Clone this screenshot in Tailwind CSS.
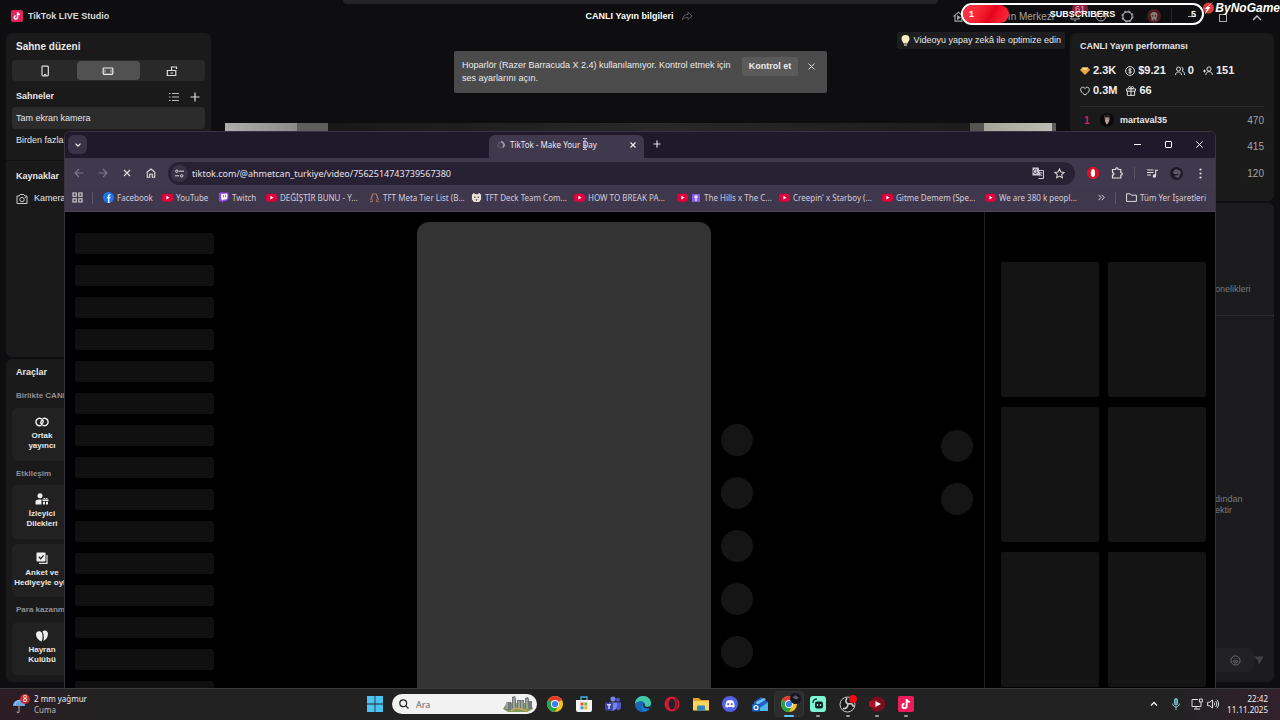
<!DOCTYPE html>
<html lang="tr">
<head>
<meta charset="utf-8">
<title>TikTok LIVE Studio</title>
<script src="https://cdn.jsdelivr.net/npm/@tailwindcss/browser@4"></script>
</head>
<body class="h-screen overflow-hidden flex flex-col bg-[#0e0e10] text-[#e6e6e6] font-['Liberation_Sans',Arial,sans-serif] text-[9px] leading-[13px]">
<svg class="hidden">
  <symbol id="yt" viewBox="0 0 12 12"><rect x="0" y="2" width="12" height="8.5" rx="2.2" fill="#e0003c"/><path d="M4.8 4.2v4l3.4-2z" fill="#fff"/></symbol>
  <symbol id="note" viewBox="0 0 16 16"><path d="M8.700 3v6.900a2.200 2.200 0 1 1-2.200-2.200M8.700 3c.2 1.700 1.400 2.800 3.200 2.900" fill="none" stroke="#fff" stroke-width="1.900"/></symbol>
  <symbol id="chrome" viewBox="0 0 16 16"><circle cx="8" cy="8" r="8" fill="#fbc116"/><path d="M8 8 1.100 4A8 8 0 0 1 14.900 4z" fill="#e33b2e"/><path d="M1.100 4A8 8 0 0 0 8 16l3.300-6.100L8 8z" fill="#2aa24c"/><circle cx="8" cy="8" r="4" fill="#fff"/><circle cx="8" cy="8" r="3.100" fill="#3b7ded"/></symbol>
</svg>

<main class="relative flex-1 min-h-0 overflow-hidden flex flex-col">
  <div class="absolute left-[343px] right-[342px] top-0 h-1 rounded-b bg-[#232324]"></div>

  <!-- Studio header -->
  <header class="h-8 shrink-0 grid grid-cols-[1fr_auto_1fr] items-center pl-[11px] pr-4">
    <div class="flex items-center gap-[5px] font-bold text-[#d8d8d8]">
      <svg class="size-3 rounded-xs bg-[#e0245a]"><use href="#note"/></svg>TikTok LIVE Studio
    </div>
    <div class="flex items-center gap-2 pl-1 font-bold text-white">CANLI Yayın bilgileri
      <button aria-label="Paylaş"><svg class="size-3" viewBox="0 0 12 12" fill="none" stroke="#5d5d5f"><path d="M7 2.200 11 6 7 9.600V7.400C4.500 7.300 2.500 8 1.500 9.600 1.700 6.500 3.500 4.600 7 4.400z"/></svg></button>
    </div>
    <div class="flex items-center justify-end text-[10px] text-[#a4a4a4]">
      <svg class="size-[11px]" viewBox="0 0 12 12" fill="none" stroke="currentColor" stroke-width="1.200"><path d="M.6 6 6 1.300 11.400 6M2.200 5v6h7.600V5"/><path d="M5 5.500v3.200l2.600-1.600z" fill="currentColor"/></svg>
      <span class="w-[105px] pr-[15px] text-right whitespace-nowrap">Yayın Merkezi</span>
      <svg class="size-3" viewBox="0 0 12 12" fill="none" stroke="currentColor"><path d="M1.500 9h9L9.300 7.500V5a3.300 3.300 0 0 0-6.600 0v2.500zM4.800 10.800h2.400"/></svg>
      <svg class="size-3 ml-[14px]" viewBox="0 0 12 12" fill="none" stroke="currentColor"><circle cx="6" cy="6" r="5"/><path d="M4.500 4.700c0-2 3-2 3 0C7.500 6 6 5.800 6 7.200M6 8.300v1"/></svg>
      <svg class="size-[13px] ml-[14px]" viewBox="0 0 14 14" fill="none" stroke="#bbb"><circle cx="7" cy="7" r="5" stroke-width="1.200"/><circle cx="7" cy="7" r="6" stroke-dasharray="2.500 2.210"/></svg>
      <svg class="size-[14px] ml-[13px]" viewBox="0 0 14 14"><circle cx="7" cy="7" r="7" fill="#4a1c20"/><path d="M3.500 6.500a3.500 3.500 0 0 1 7 0L9.500 9v2.500h-5V9z" fill="#8d7b75"/><path d="M4.800 6.300h1.500v1.300H4.800zM7.700 6.300h1.500v1.300H7.700zM6 10h.6v1.500H6zM7.400 10H8v1.500h-.6z" fill="#2b1719"/></svg>
      <span class="h-4 w-px ml-[10px] bg-[#29292b]"></span>
      <button class="ml-4 h-px w-[8px] bg-[#aaa]" aria-label="Küçült"></button>
      <button class="ml-[23px] mt-1 size-[8px] border border-[#aaa]" aria-label="Ekranı kapla"></button>
      <button class="ml-[23px] mt-1" aria-label="Kapat"><svg class="size-[14px]" viewBox="0 0 14 14" fill="none" stroke="#ccc" stroke-width="1.300"><path d="m3 9 4-4 4 4"/></svg></button>
    </div>
  </header>

  <div class="flex-1 min-h-0 flex px-[6px] pb-[6px] pt-px">
    <!-- Scenes, sources and tools -->
    <aside class="w-[205px] shrink-0 flex flex-col gap-[2px]">
      <section class="h-[324px] shrink-0 rounded-md bg-[#1a1a1b] px-[6px] pt-[7px] flex flex-col">
        <h2 class="px-1 text-[10px] font-bold">Sahne düzeni</h2>
        <div class="mt-[7px] h-[21px] shrink-0 rounded bg-[#29292a] grid grid-cols-3 p-px">
          <button class="flex items-center justify-center" aria-label="Dikey"><svg class="size-3" viewBox="0 0 12 12" fill="none" stroke="#ddd" stroke-width="1.200"><rect x="3" y="1.200" width="6.300" height="9.600" rx=".8"/><path d="M5 9.600h2.300"/></svg></button>
          <button class="flex items-center justify-center rounded bg-[#515151]" aria-label="Yatay"><svg class="size-3" viewBox="0 0 12 12" fill="none" stroke="#eee" stroke-width="1.200"><rect x="1.200" y="3" width="9.600" height="6.300" rx=".8"/><path d="M3 4.500v3.300M9 4.500v3.300" stroke="#aaa"/></svg></button>
          <button class="flex items-center justify-center" aria-label="Kilit"><svg class="size-3" viewBox="0 0 12 12" fill="none" stroke="#ddd" stroke-width="1.200"><path d="M1.300 5.500h8.500v5H1.300zM5.500 5.500V2h5v2M4.500 8h2.500"/></svg></button>
        </div>
        <div class="mt-[9px] px-1 flex items-center">
          <h2 class="font-bold flex-1">Sahneler</h2>
          <button class="mr-[11px]" aria-label="Liste"><svg class="size-[10px]" viewBox="0 0 10 10" stroke="#bbb"><path d="M0 1.500h1.500M3 1.500h7M0 5h1.500M3 5h7M0 8.500h1.500M3 8.500h7"/></svg></button>
          <button class="mr-px" aria-label="Sahne ekle"><svg class="size-[10px]" viewBox="0 0 10 10" stroke="#ddd" stroke-width="1.200"><path d="M5 .5v9M.5 5h9"/></svg></button>
        </div>
        <button class="mt-1 h-[22px] shrink-0 rounded bg-[#2c2c2d] px-1 text-left">Tam ekran kamera</button>
        <button class="h-[22px] shrink-0 px-1 text-left">Birden fazla kamera</button>
        <hr class="mt-[9px] -mx-[6px] border-[#111]">
        <h2 class="mt-[9px] px-1 font-bold">Kaynaklar</h2>
        <div class="mt-[9px] px-1 flex items-center gap-[6px]">
          <svg class="size-3" viewBox="0 0 12 12" fill="none" stroke="#ccc"><path d="M1 3h2.200l1-1.500h3.600l1 1.500H11v7.500H1z"/><circle cx="6" cy="6.600" r="2.200"/><path d="M8.800 4.500h1"/></svg>Kamera
        </div>
      </section>
      <section class="flex-1 min-h-0 rounded-md bg-[#1a1a1b] px-[6px] pt-[7px] flex flex-col">
        <h2 class="px-1 font-bold">Araçlar</h2>
        <h3 class="mt-[10px] px-1 text-[8px] font-bold text-[#8f8f90]">Birlikte CANLI</h3>
        <button class="mt-[6px] h-[53px] w-[60px] rounded-md bg-[#212122] flex flex-col items-center pt-2 text-[8px] leading-[10px] font-bold">
          <svg class="w-[14px] h-3 mb-[3px]" viewBox="0 0 14 12" fill="none" stroke="#eee" stroke-width="1.400"><path d="M6.300 9.300A3.700 3.700 0 1 1 8 4.500C8.500 6 8 7 7 7.800M7.700 2.700A3.700 3.700 0 1 1 6 7.500C5.500 6 6 5 7 4.200"/></svg>Ortak<br>yayıncı</button>
        <h3 class="mt-[6px] px-1 text-[8px] font-bold text-[#8f8f90]">Etkileşim</h3>
        <button class="mt-[5px] h-[54px] w-[60px] rounded-md bg-[#212122] flex flex-col items-center pt-2 text-[8px] leading-[10px] font-bold">
          <svg class="w-[14px] h-3 mb-1" viewBox="0 0 14 12" fill="#eee"><circle cx="5" cy="2.800" r="2.500"/><path d="M.5 11.500V8.600C.5 6.800 2 6.400 6.500 6.400v5.100zM7.500 6.500h6V8h-6zM8 8.800h2v2.700H8zM11 8.800h2v2.700h-2zM8.500 5h1.800v1H8.500zM11 5h1.500v1H11z"/></svg>İzleyici<br>Dilekleri</button>
        <button class="mt-[5px] h-[53px] w-[60px] rounded-md bg-[#212122] flex flex-col items-center pt-2 text-[8px] leading-[10px] font-bold whitespace-nowrap">
          <svg class="w-[14px] h-3 mb-1" viewBox="0 0 14 12"><rect x="1.500" y=".5" width="9" height="9" rx="1" fill="#eee"/><path d="M12 3v8.300H4" fill="none" stroke="#ddd" stroke-width="1.200"/><path d="m3.800 4.800 1.800 2 3-3.500" fill="none" stroke="#222" stroke-width="1.300"/></svg>Anket ve<br>Hediyeyle oyla</button>
        <h3 class="mt-[6px] px-1 text-[8px] font-bold text-[#8f8f90]">Para kazanma</h3>
        <button class="mt-[6px] h-[53px] w-[60px] rounded-md bg-[#212122] flex flex-col items-center pt-2 text-[8px] leading-[10px] font-bold">
          <svg class="w-[14px] h-3 mb-[3px]" viewBox="0 0 14 12" fill="#eee"><path d="M6.500 11.500C3 10 1 7.500 1 4.300 1 .5 5.500.2 7 3c.8 2.500.8 6-.5 8.500z"/><path d="M8.300 11C9.200 8 9 4.500 7.500 1.500 10-.5 13 1 13 4c0 3-2 5.800-4.700 7z"/></svg>Hayran<br>Kulübü</button>
      </section>
    </aside>

    <!-- Preview -->
    <section class="flex-1 min-w-0 pl-[14px] pr-[5px] flex flex-col">
      <button class="self-end -mt-px h-[17px] px-1 rounded-xs bg-[#1d1d1f] flex items-center gap-1 whitespace-nowrap">
        <svg class="w-[9px] h-[11px]" viewBox="0 0 9 11"><path d="M4.500 0A4 4 0 0 0 .5 4c0 2 1.500 2.800 2 4.500h4C7 6.800 8.500 6 8.500 4a4 4 0 0 0-4-4z" fill="#f6ecc0"/><path d="M3 9h3v2H3z" fill="#9c968a"/></svg>Videoyu yapay zekâ ile optimize edin</button>
      <div class="mt-[74px] mr-[9px] h-3 flex">
        <div class="w-[72px] bg-linear-to-r from-[#adadab] to-[#8b8b89]"></div>
        <div class="w-[31px] bg-[#5e5e5c]"></div>
        <div class="flex-1 bg-linear-to-r from-[#181818] via-[#282828] to-[#1c1c1c]"></div>
        <div class="w-[14px] bg-[#55554f]"></div>
        <div class="w-[68px] bg-linear-to-r from-[#a5a69a] to-[#bcbcb2]"></div>
        <div class="w-1 bg-[#5c5c5a]"></div>
      </div>
    </section>

    <!-- Performance and chat -->
    <aside class="w-[204px] shrink-0 flex flex-col gap-[2px]">
      <section class="h-[168px] shrink-0 rounded-md bg-[#1a1a1b] px-[10px] pt-[7px]">
        <h2 class="font-bold">CANLI Yayın performansı</h2>
        <div class="mt-[11px] flex gap-[9px] text-[11px] font-bold text-[#f0f0f0]">
          <span class="flex items-center gap-[3px]"><svg class="size-[10px]" viewBox="0 0 10 10"><path d="M2 1.500h6L10 4 5 9 0 4z" fill="#eea63f"/><path d="M2 1.500h6L6.500 4h-3z" fill="#ffd98d"/></svg>2.3K</span>
          <span class="flex items-center gap-[3px]"><svg class="size-[10px]" viewBox="0 0 10 10" fill="none" stroke="#ddd"><circle cx="5" cy="5" r="4.400"/><path d="M6.500 3.500c-.7-.8-2.900-.6-2.900.4C3.600 5.300 6.500 4.700 6.500 6c0 1.200-2.300 1.200-3 .3M5 2v6"/></svg>$9.21</span>
          <span class="flex items-center gap-[3px]"><svg class="size-[10px]" viewBox="0 0 10 10" fill="none" stroke="#ddd"><circle cx="3.500" cy="3" r="2"/><path d="M.5 9c0-4 6-4 6 0M6.500 1.200a2 2 0 0 1 .5 3.700C9 5.500 9.500 7 9.500 9"/></svg>0</span>
          <span class="flex items-center gap-[3px]"><svg class="size-[10px]" viewBox="0 0 10 10" fill="none" stroke="#ddd"><circle cx="6" cy="3" r="2.100"/><path d="M2.800 9c0-4.500 6.500-4.500 6.500 0M0 5h3M1.500 3.500v3"/></svg>151</span>
        </div>
        <div class="mt-[7px] flex gap-[9px] text-[11px] font-bold text-[#f0f0f0]">
          <span class="flex items-center gap-[3px]"><svg class="size-[10px]" viewBox="0 0 10 10" fill="none" stroke="#ddd"><path d="M5 9C2 7 .6 5.300.6 3.500.6 1 3.800.4 5 2.500 6.200.4 9.400 1 9.400 3.500 9.400 5.300 8 7 5 9z"/></svg>0.3M</span>
          <span class="flex items-center gap-[3px]"><svg class="size-[10px]" viewBox="0 0 10 10" fill="none" stroke="#ddd"><path d="M.6 2.800h8.800v2.400H.6zM1.400 5.200v4.200h7.200V5.200M5 2.800v6.600M5 2.800C2 2.500 2 .5 3.500.5S5 2.800 5 2.800 5 .5 6.500.5 8 2.500 5 2.800"/></svg>66</span>
        </div>
        <hr class="mt-[9px] border-[#2c2c2d]">
        <div class="mt-[6px] h-[14px] flex items-center">
          <span class="w-5 pl-1 text-[10px] font-bold text-[#d3244f]">1</span>
          <svg class="size-[14px] mr-[6px]" viewBox="0 0 14 14"><circle cx="7" cy="7" r="7" fill="#08080a"/><path d="M4.500 3h4.600l.4 4L8 10.500l-1.500 1L5 8z" fill="#b7a49a"/><path d="M4 2.500 9.500 2l.5 3-2-1-3.500.5zM5 6h1.200M7.500 6h1.200" fill="#181416" stroke="#443835" stroke-width=".6"/></svg>
          <span class="flex-1 font-bold">martaval35</span><span class="text-[10px] text-[#a3a3a3]">470</span>
        </div>
        <div class="mt-[13px] h-[13px] text-right text-[10px] text-[#a3a3a3]">415</div>
        <div class="mt-[14px] h-[13px] text-right text-[10px] text-[#a3a3a3]">120</div>
      </section>
      <section class="flex-1 min-h-0 rounded-md bg-[#1b1b1d] leading-[11px] text-[#79797b] flex flex-col">
        <p class="mt-[81px] pl-[145px]">onelikleri</p>
        <hr class="mt-[20px] border-[#2d2d2f]">
        <div class="mt-[178px] pl-[145px]"><p>dından</p><p>ektir</p></div>
        <div class="mt-auto mb-[10px] mr-[10px] flex items-center justify-end">
          <button class="h-6 w-10 pl-4 rounded bg-[#212123]" aria-label="Emoji"><svg class="size-[11px]" viewBox="0 0 12 12" fill="none" stroke="#737375"><circle cx="6" cy="6" r="5"/><path d="M3.500 6.500h5c-.3 3-4.700 3-5 0zM4 4h.8M7.200 4H8"/></svg></button>
          <button class="-ml-px" aria-label="Gönder"><svg class="size-[11px]" viewBox="0 0 11 11"><path d="M.5 1.500h10L6 10 5 5.500z" fill="#414143"/></svg></button>
        </div>
      </section>
    </aside>
  </div>

  <!-- Speaker notice -->
  <div class="absolute left-[454px] top-[51px] w-[373px] rounded-xs bg-[#4b4b4b] pl-2 pr-3 pt-[6px] pb-[8px] flex items-start text-[#ececec]">
    <p class="w-[280px] pt-[2px]">Hoparlör (Razer Barracuda X 2.4) kullanılamıyor. Kontrol etmek için ses ayarlarını açın.</p>
    <button class="h-[19px] w-[56px] shrink-0 rounded-xs bg-[#5a5a5a] font-bold">Kontrol et</button>
    <button class="ml-auto mt-[6px]" aria-label="Kapat"><svg class="size-[7px]" viewBox="0 0 7 7" stroke="#ddd"><path d="m.5.5 6 6M6.500.5l-6 6"/></svg></button>
  </div>

  <!-- Subscriber goal -->
  <span class="absolute right-[192px] top-[3px] h-3 px-[3px] rounded-full bg-[#d32357]/60 text-[9px] leading-3 text-[#f5a9bf]">61</span>
  <div class="absolute right-[76px] top-[3px] w-[243px] h-[22px] rounded-full border-2 border-white overflow-hidden text-white font-bold">
    <div class="h-full w-[46px] rounded-r-full bg-linear-120 from-[#ff3040] from-20% via-[#e8001c] via-60% to-[#ff2c3c]"></div>
    <div class="absolute inset-0 flex items-center justify-between px-[6px]"><span>1</span><span>SUBSCRIBERS</span><span>5</span></div>
  </div>
  <div class="absolute right-0 top-0 flex items-center text-[12px] leading-4 italic font-bold text-white">
    <svg class="w-3 h-[14px]" viewBox="0 0 12 14"><circle cx="5.500" cy="7" r="5.500" fill="#dd3b36"/><path d="M11 0 5 6h2.500L1.500 14l2.500-6H1.500z" fill="#fff"/></svg>ByNoGame</div>

  <!-- Browser window -->
  <section class="absolute inset-x-16 top-[131px] bottom-0 rounded-t-md overflow-hidden border-x border-t border-[#393342] bg-black flex flex-col font-['Noto_Sans','Open_Sans',sans-serif] text-[#ddd8e4]">
    <div class="h-[26px] shrink-0 bg-[#1f192c] flex items-start pl-[3px] pr-3">
      <button class="mt-[3px] size-[19px] rounded-md bg-[#3a3347] flex items-center justify-center" aria-label="Sekme ara"><svg class="size-2" viewBox="0 0 8 8" fill="none" stroke="#eee" stroke-width="1.200"><path d="m1.500 2.700 2.500 2.500 2.500-2.500"/></svg></button>
      <div class="ml-[402px] mt-[3px] h-[23px] w-[155px] rounded-t-md bg-[#40384d] flex items-center pl-2 pr-2 pb-1 text-[8px] text-[#efeaf4]">
        <svg class="size-2 mr-[5px]" viewBox="0 0 8 8" fill="none"><circle cx="3.500" cy="4" r="2.600" stroke="#6b6378"/><path d="M4 .6a3.400 3.400 0 0 1 2 6" stroke="#ddd"/></svg>
        <span class="flex-1 whitespace-nowrap">TikTok - Make Your Day</span>
        <button aria-label="Sekmeyi kapat"><svg class="size-[6px]" viewBox="0 0 6 6" stroke="#eee" stroke-width="1.100"><path d="m.5.5 5 5M5.500.5l-5 5"/></svg></button>
      </div>
      <button class="ml-[9px] mt-[8px]" aria-label="Yeni sekme"><svg class="size-2" viewBox="0 0 8 8" stroke="#ddd" stroke-width="1.200"><path d="M4 .5v7M.5 4h7"/></svg></button>
      <div class="flex-1"></div>
      <button class="mt-3 w-[7px] h-px bg-white" aria-label="Simge durumuna küçült"></button>
      <button class="ml-6 mt-[9px] size-[7px] rounded-[1px] border border-white" aria-label="Ekranı kapla"></button>
      <button class="ml-6 mt-[9px]" aria-label="Pencereyi kapat"><svg class="size-[7px]" viewBox="0 0 7 7" stroke="#fff"><path d="m.3.3 6.400 6.400M6.700.3.3 6.700"/></svg></button>
    </div>
    <div class="h-[30px] shrink-0 bg-[#40384d] flex items-center pl-[9px] pr-[13px]">
      <button aria-label="Geri"><svg class="size-[10px]" viewBox="0 0 10 10" fill="none" stroke="#7f778b" stroke-width="1.100"><path d="M9.500 5H1M5 1 1 5l4 4"/></svg></button>
      <button class="ml-[14px]" aria-label="İleri"><svg class="size-[10px]" viewBox="0 0 10 10" fill="none" stroke="#7f778b" stroke-width="1.100"><path d="M.5 5H9M5 1l4 4-4 4"/></svg></button>
      <button class="ml-[15px]" aria-label="Durdur"><svg class="size-2" viewBox="0 0 8 8" stroke="#ddd" stroke-width="1.200"><path d="m1 1 6 6M7 1 1 7"/></svg></button>
      <button class="ml-[15px]" aria-label="Ana sayfa"><svg class="size-[10px]" viewBox="0 0 10 10" fill="none" stroke="#ddd" stroke-width="1.100"><path d="M1.300 4 5 1l3.700 3v5.300H6.300v-3H3.700v3H1.300z"/></svg></button>
      <div class="ml-3 h-[23px] flex-1 rounded-full bg-[#282133] flex items-center pl-[3px] pr-[10px]">
        <button class="size-[17px] rounded-full bg-[#3a3347] flex items-center justify-center" aria-label="Site bilgileri"><svg class="size-[9px]" viewBox="0 0 9 9" fill="none" stroke="#ddd"><circle cx="1.800" cy="2.200" r="1.200"/><path d="M4 2.200h5M0 6.800h4"/><circle cx="6.700" cy="6.800" r="1.200"/></svg></button>
        <input class="ml-1 flex-1 min-w-0 bg-transparent outline-none text-[9px] text-[#e6e0ec]" aria-label="Adres" value="tiktok.com/@ahmetcan_turkiye/video/7562514743739567380">
        <button aria-label="Çevir"><svg class="size-3" viewBox="0 0 12 12"><path d="M.5.5h6l2 8h-8z" fill="#cfc9d6"/><path d="M5.500 3.500h6v8h-5" fill="none" stroke="#cfc9d6"/><path d="M5 3.200A2 2 0 1 0 5.300 5H4" fill="none" stroke="#3a3347" stroke-width=".9"/><path d="M7.700 5.700h3M9.200 5v.7C9 7.500 8.500 8.500 7.500 9.200M8.300 7l2 2.200" fill="none" stroke="#cfc9d6" stroke-width=".7"/></svg></button>
        <button class="ml-[10px]" aria-label="Yer işareti ekle"><svg class="size-[11px]" viewBox="0 0 12 12" fill="none" stroke="#ddd" stroke-width="1.100"><path d="m6 1 1.500 3.300 3.500.4-2.600 2.400.7 3.600L6 8.900l-3.100 1.800.7-3.600L1 4.700l3.500-.4z"/></svg></button>
      </div>
      <svg class="size-3 ml-3" viewBox="0 0 12 12"><path d="M3.500 0h5L12 3.500v5L8.500 12h-5L0 8.500v-5z" fill="#d3122a"/><path d="M3.800 5.500 4.500 3l.8-.8.8-.5.7.6.9.7L8 6.500c.2 2-.8 3.500-2 3.500S3.500 8.500 3.800 5.500z" fill="#fff"/></svg>
      <button class="ml-3" aria-label="Uzantılar"><svg class="size-3" viewBox="0 0 12 12" fill="none" stroke="#ddd" stroke-width="1.200"><path d="M1.500 2.500h3C4.500.3 7.200.3 7.200 2.500h2.600v3c2 0 2 2.600 0 2.600V11H1.500V8.200c1.800 0 1.800-2.600 0-2.600z"/></svg></button>
      <span class="ml-[11px] mr-3 h-3 w-px bg-[#5c5369]"></span>
      <button aria-label="Medya"><svg class="size-[11px]" viewBox="0 0 11 11" fill="none" stroke="#ddd" stroke-width="1.100"><path d="M0 2h6.500M0 4.500h6.500M0 7h4M8.600 8V2.200H11"/><circle cx="7.400" cy="8" r="1.200" fill="#ddd"/></svg></button>
      <button class="ml-3" aria-label="Profil"><svg class="size-[13px]" viewBox="0 0 13 13"><circle cx="6.500" cy="6.500" r="6.500" fill="#1c1a25"/><path d="M3 4.500 6 2l4 1.500 1 3-2 1-3-2-2 2zM4 9l3-1 3 1.500-2 1.500z" fill="#5a5666"/><path d="M5 6.500h2M8 8h2" stroke="#a19cae" stroke-width=".7"/></svg></button>
      <button class="ml-4" aria-label="Menü"><svg class="w-[3px] h-[11px]" viewBox="0 0 3 11" fill="#ddd"><circle cx="1.500" cy="1.500" r="1.100"/><circle cx="1.500" cy="5.500" r="1.100"/><circle cx="1.500" cy="9.500" r="1.100"/></svg></button>
    </div>
    <nav class="h-6 shrink-0 pb-1 bg-[#3f374b] border-b border-[#4a4455] flex items-center pl-[7px] pr-[9px] text-[8px] whitespace-nowrap text-[#d3cddb]">
      <button aria-label="Uygulamalar"><svg class="size-[11px]" viewBox="0 0 11 11" fill="none" stroke="#ddd" stroke-width="1.100"><path d="M1 1h3.200v3.200H1zM6.800 1H10v3.200H6.800zM1 6.800h3.200V10H1zM6.800 6.800H10V10H6.800z"/></svg></button>
      <span class="ml-[9px] mr-[10px] h-3 w-px bg-[#5c5369]"></span>
      <a href="#" class="w-[59px] flex items-center gap-[3px]"><svg class="size-[11px]" viewBox="0 0 12 12"><circle cx="6" cy="6" r="6" fill="#1877f2"/><path d="M8.200 3.200c-1.700-.3-2 .3-2 1.500V12M4.300 6.200H8" fill="none" stroke="#fff" stroke-width="1.500"/></svg>Facebook</a>
      <a href="#" class="w-[56px] flex items-center gap-[3px]"><svg class="size-[11px]"><use href="#yt"/></svg>YouTube</a>
      <a href="#" class="w-12 flex items-center gap-[3px]"><svg class="size-[11px]" viewBox="0 0 12 12"><path d="M1.500.5h10v7L8.500 10H6.300L4 12v-2H1V2.500z" fill="#8d46f0"/><path d="M3.500 1.800h6.700V7L8.500 8.300H6L4.800 9.500V8.300H3.500z" fill="#fff"/><path d="M6 3.500v2.300M8.200 3.500v2.300" stroke="#8d46f0"/></svg>Twitch</a>
      <a href="#" class="w-[103px] flex items-center gap-[3px]"><svg class="size-[11px]"><use href="#yt"/></svg>DEĞİŞTİR BUNU - Y...</a>
      <a href="#" class="w-[102px] flex items-center gap-[3px]"><svg class="size-[11px]" viewBox="0 0 12 12" fill="none" stroke="#a97a6c"><path d="M1 10.500h3L3.500 8 2.800 7 4 2h4l1.200 5-.7 1-.5 2.500h3M4 2 1.500 9M8 2l2.500 7"/></svg>TFT Meta Tier List (B...</a>
      <a href="#" class="w-[103px] flex items-center gap-[3px]"><svg class="size-[11px]" viewBox="0 0 12 12"><path d="M1 3 3 1l2 1.500h2L9 1l2 2v8H1z" fill="#e9e2da"/><path d="M3.500 5h1.200v1.500H3.500zM7.300 5h1.200v1.500H7.300zM1 8l2 3H1zM11 8l-2 3h2zM5 8h2l-1 2z" fill="#40343a"/></svg>TFT Deck Team Com...</a>
      <a href="#" class="w-[103px] flex items-center gap-[3px]"><svg class="size-[11px]"><use href="#yt"/></svg>HOW TO BREAK PA...</a>
      <a href="#" class="w-[102px] flex items-center gap-[3px]"><svg class="size-[11px]"><use href="#yt"/></svg><svg class="ml-px mr-px size-2" viewBox="0 0 8 8"><rect width="8" height="8" rx="1" fill="#8a5cf0"/><path d="M4 1v6M2 3h4" stroke="#fff" stroke-width="1.200"/></svg>The Hills x The C...</a>
      <a href="#" class="w-[103px] flex items-center gap-[3px]"><svg class="size-[11px]"><use href="#yt"/></svg>Creepin' x Starboy (...</a>
      <a href="#" class="w-[103px] flex items-center gap-[3px]"><svg class="size-[11px]"><use href="#yt"/></svg>Gitme Demem (Spe...</a>
      <a href="#" class="w-[103px] flex items-center gap-[3px]"><svg class="size-[11px]"><use href="#yt"/></svg>We are 380 k peopl...</a>
      <div class="flex-1"></div>
      <button aria-label="Diğer yer işaretleri"><svg class="size-[7px]" viewBox="0 0 7 7" fill="none" stroke="#ddd"><path d="m.5.8 2.500 2.700L.5 6.200M3.700.8l2.500 2.700-2.500 2.700"/></svg></button>
      <span class="mx-[10px] h-3 w-px bg-[#5c5369]"></span>
      <a href="#" class="flex items-center gap-[3px]"><svg class="size-[11px]" viewBox="0 0 11 11" fill="none" stroke="#ddd"><path d="M.6 1.800h3.600l1.200 1.400h5v6.200H.6z"/></svg>Tüm Yer İşaretleri</a>
    </nav>

    <!-- Loading page -->
    <div class="flex-1 min-h-0 flex items-stretch overflow-hidden">
      <div class="w-[149px] shrink-0 pl-[10px] pt-[21px] flex flex-col gap-[11px] *:h-[21px] *:shrink-0 *:rounded-xs *:bg-[#101010]">
        <div></div><div></div><div></div><div></div><div></div><div></div><div></div><div></div><div></div><div></div><div></div><div></div><div></div><div></div><div></div>
      </div>
      <div class="flex-1 flex pl-[203px] pr-[11px]">
        <div class="mt-[10px] w-[294px] rounded-t-xl bg-[#333]"></div>
        <div class="ml-[10px] pt-[212px] flex flex-col gap-[21px] *:size-8 *:shrink-0 *:rounded-full *:bg-[#151515]">
          <div></div><div></div><div></div><div></div><div></div>
        </div>
        <div class="ml-auto pt-[218px] flex flex-col gap-[21px] *:size-8 *:shrink-0 *:rounded-full *:bg-[#151515]">
          <div></div><div></div>
        </div>
      </div>
      <div class="w-[231px] shrink-0 border-l border-[#1e1e1e] pl-4 pr-[9px] pt-[50px] grid grid-cols-2 auto-rows-[135px] gap-x-[9px] gap-y-[10px] *:rounded-xs *:bg-[#141414]">
        <div></div><div></div><div></div><div></div><div></div><div></div>
      </div>
    </div>
  </section>
  <svg class="absolute left-[582px] top-[138px] w-[6px] h-3" viewBox="0 0 6 12" fill="none" stroke="#c9c4d0"><path d="M1 .5h1.500l.5.500.5-.5H5M3 1v10M1 11.500h1.500l.5-.5.5.500H5M1.500 7.500h3"/></svg>
</main>

<!-- Taskbar -->
<footer class="h-8 shrink-0 border-t border-[#3a3a3b] bg-[linear-gradient(90deg,#2d1d24,#222223_8%,#222223_92%,#33212b)] grid grid-cols-[1fr_auto_1fr] items-center font-['Noto_Sans','Open_Sans',sans-serif] text-[8px] leading-[11px] text-[#eee]">
  <div class="flex items-center gap-1 pl-[12px] pb-[2px]">
    <svg class="w-[18px] h-5" viewBox="0 0 18 20"><path d="M1 12c0-8 12-8 12 0z" fill="#6aa5e6"/><path d="M3 11c1-4 4-5 6-5" stroke="#b5d5f7" fill="none"/><path d="M7 11v6.500c0 1.500-2 1.500-2 0" fill="none" stroke="#999" stroke-width="1.200"/><circle cx="13" cy="5" r="5" fill="#c42b38"/><text x="13" y="8" text-anchor="middle" font-size="8" fill="#fff">8</text></svg>
    <p>2 mm yağmur<br><span class="text-[#bbb]">Cuma</span></p>
  </div>
  <div class="flex items-center pl-2 pb-px">
    <button aria-label="Başlat"><svg class="size-4" viewBox="0 0 16 16"><path d="M0 0h7.600v7.600H0zM8.400 0H16v7.600H8.400zM0 8.400h7.600V16H0zM8.400 8.400H16V16H8.400z" fill="#4cc2f1"/></svg></button>
    <label class="ml-[9px] h-5 w-[145px] rounded-full bg-[#f2f2f2] flex items-center pl-[7px] pr-1">
      <svg class="size-[10px] shrink-0" viewBox="0 0 10 10" fill="none" stroke="#222" stroke-width="1.200"><circle cx="4.200" cy="4.200" r="3.400"/><path d="m6.800 6.800 2.700 2.700"/></svg>
      <input class="ml-[7px] flex-1 min-w-0 outline-none text-[9px] placeholder:text-[#666]" placeholder="Ara" aria-label="Ara">
      <svg class="w-[30px] h-4" viewBox="0 0 30 16"><path d="M0 13 3 8l4-2 3 1h12l6 1 2 5-6 3H5z" fill="#7f9a58"/><path d="M3 6h5v8H3zM9 1l3-1 1 3v11H9zM14 4h7v10h-7zM22 2l3-1 1 2v10h-4zM26 5h3v8h-3z" fill="#747a7b"/><path d="M4 6v7M11 2v11M16 5v8M19 5v8M24 3v10" stroke="#c0c8c7"/><path d="M8 15c2-3 7-3 10-2s5 1 6 2" stroke="#c9ac55" stroke-width="1.500" fill="none"/></svg>
    </label>
    <div class="ml-[3px] w-[381px] grid grid-cols-13 *:relative *:h-[26px] *:flex *:items-center *:justify-center">
      <button aria-label="Chrome"><svg class="size-4"><use href="#chrome"/></svg></button>
      <button aria-label="Microsoft Store"><svg class="size-4" viewBox="0 0 16 16"><path d="M5 4V1h6v3" fill="none" stroke="#3cb3e8" stroke-width="1.300"/><path d="M0 4h16v10q0 2-2 2H2q-2 0-2-2z" fill="#f3f3f3"/><path d="M4.500 6.500h3v3h-3z" fill="#e4502d"/><path d="M8.300 6.500h3v3h-3z" fill="#7db52f"/><path d="M4.500 10.300h3v3h-3z" fill="#2c9fe0"/><path d="M8.300 10.300h3v3h-3z" fill="#f2b51d"/></svg></button>
      <button aria-label="Teams"><svg class="size-4" viewBox="0 0 16 16"><circle cx="8" cy="3" r="2.600" fill="#7b83eb"/><circle cx="13" cy="3.800" r="2" fill="#5059c9"/><path d="M10 6.500h6V11a3 3 0 0 1-4 3z" fill="#5059c9"/><path d="M4 6.500h8V11a4.500 4.500 0 0 1-8 2z" fill="#7b83eb"/><rect y="6.500" width="8" height="8" rx="1" fill="#3c45a9"/><path d="M2 8.700h4M4 8.700V13" stroke="#fff" stroke-width="1.100"/></svg></button>
      <button aria-label="Edge"><svg class="size-4" viewBox="0 0 16 16"><circle cx="8" cy="8" r="8" fill="#1478cf"/><path d="M0 8C0 3 4 0 8 0c5 0 8 3.500 8 7 0 2.500-2 4-4.500 4C9 11 9 9.500 10 8.500 10 5 4 3.500 0 8z" fill="#42c8a4"/><path d="M0 8c3-4 8-3.500 10 0-5-1-5 6 0 7.800C4 17 0 12.500 0 8z" fill="#1b65b4"/><path d="M9.500 8c-2 2 .5 4.500 5.500 3.300" stroke="#222" stroke-width="1.500" fill="none"/></svg></button>
      <button aria-label="Opera"><svg class="size-4" viewBox="0 0 16 16"><circle cx="8" cy="8" r="7.500" fill="#d81b33"/><ellipse cx="8" cy="8" rx="3.400" ry="5.500" fill="#242324"/><path d="M11 2c3 3 3 9 0 12" stroke="#9b1124" stroke-width="2" fill="none"/></svg></button>
      <button aria-label="Dosya Gezgini"><svg class="size-4" viewBox="0 0 16 16"><path d="M0 2h6l2 2h8v10H0z" fill="#e0a22a"/><path d="M0 5h16v9.500H0z" fill="#fbd45c"/><path d="M4 10.500q0-1 1-1h6q1 0 1 1v4H4z" fill="#2b83c8"/></svg></button>
      <button aria-label="Discord"><svg class="size-4" viewBox="0 0 16 16"><circle cx="8" cy="8" r="8" fill="#5661e8"/><path d="M5 4.700c2-.6 4-.6 6 0 1.300 2 1.800 4 1.600 6l-2 1-.7-1c-1.300.3-2.500.3-3.800 0l-.7 1-2-1c-.2-2 .3-4 1.600-6z" fill="#fff"/><circle cx="6.200" cy="8.200" r="1.100" fill="#5661e8"/><circle cx="9.800" cy="8.200" r="1.100" fill="#5661e8"/></svg></button>
      <button aria-label="Outlook"><svg class="size-4" viewBox="0 0 16 16"><path d="M2 6 9 1l7 5v9H2z" fill="#1e65c5"/><path d="m4 6 8-4 2 1.300L5 9z" fill="#74c5f5"/><path d="M3 15 16 6.500V15z" fill="#51b6ef"/><rect y="8" width="8" height="7.500" rx="1" fill="#145cb8"/><circle cx="4" cy="11.700" r="2" fill="none" stroke="#fff" stroke-width="1.200"/></svg></button>
      <button class="rounded bg-[#2c2c2d] border border-[#343435]" aria-label="Chrome, açık"><svg class="size-4"><use href="#chrome"/></svg><svg class="absolute right-[2px] top-px size-[11px]" viewBox="0 0 10 10"><circle cx="5" cy="5" r="5" fill="#18151f"/><path d="m2 4 3-2 3 2-2 2-2-1zM4 8l3-1" fill="#5e586c"/></svg><span class="absolute -bottom-px h-[2px] w-[10px] rounded bg-[#5cc5f3]"></span></button>
      <button aria-label="Streamlabs"><svg class="size-4" viewBox="0 0 16 16"><rect width="16" height="16" rx="3" fill="#80f5d2"/><path d="M3 7c0-2.500 1.500-4 4-4" stroke="#10382f" stroke-width="1.300" fill="none"/><rect x="5" y="5.500" width="8" height="7" rx="2" fill="#10221f"/><path d="M7.500 8v2M10.500 8v2" stroke="#80f5d2" stroke-width="1.200"/></svg><span class="absolute bottom-0 h-[2px] w-1 rounded bg-[#9a9a9a]"></span></button>
      <button aria-label="OBS Studio"><svg class="size-[18px]" viewBox="0 0 18 18"><circle cx="8.500" cy="9.500" r="7.500" fill="#1b1b1c" stroke="#ccc"/><path d="M8 3c-2 3-1 5 1 6M9 9c3-1 5 0 5.500 3M9 9c0 3-2 5-5 4.500" stroke="#ccc" stroke-width="1.600" fill="none"/><circle cx="14" cy="4" r="4" fill="#f00b12"/></svg><span class="absolute bottom-0 h-[2px] w-1 rounded bg-[#9a9a9a]"></span></button>
      <button aria-label="YouTube"><svg class="size-4" viewBox="0 0 16 16"><circle cx="8.500" cy="8" r="7.500" fill="#7c0d1d"/><path d="M0 5.500 8 4v8l-8-1.500z" fill="#b10e28"/><path d="M6.500 5v6L12 8z" fill="#fff"/></svg><span class="absolute bottom-0 h-[2px] w-1 rounded bg-[#9a9a9a]"></span></button>
      <button aria-label="TikTok LIVE Studio"><svg class="size-4 rounded-xs bg-[#ec1c5a]"><use href="#note"/></svg><span class="absolute bottom-0 h-[2px] w-1 rounded bg-[#9a9a9a]"></span></button>
    </div>
  </div>
  <div class="flex items-center justify-end pr-3 pb-px">
    <button aria-label="Gizli simgeler"><svg class="size-2" viewBox="0 0 8 8" fill="none" stroke="#eee" stroke-width="1.300"><path d="m1 5.500 3-3 3 3"/></svg></button>
    <svg class="ml-[14px] w-2 h-3" viewBox="0 0 8 12" fill="none" stroke="#7cc7cf"><rect x="2.500" y=".5" width="3" height="6.500" rx="1.500" fill="#4f949c"/><path d="M.6 5.500c0 4.500 6.800 4.500 6.800 0M4 9v3"/></svg>
    <svg class="ml-[11px] size-3" viewBox="0 0 12 12" fill="none" stroke="#ddd"><path d="M7 1.500H1v7h9V6M5 8.500v2M3 11h6M8.500 1h2.800v3H8.500zM10 4v2"/></svg>
    <svg class="ml-1 size-3" viewBox="0 0 12 12" fill="none" stroke="#ddd"><path d="M.6 4.300h2L5.500 2v8L2.600 7.700h-2zM7 4.500c.8 1 .8 2 0 3M8.600 3c1.600 2 1.600 4 0 6M10 1.700c2 2.800 2 5.800 0 8.600"/></svg>
    <p class="ml-2 text-right">22:42<br>11.11.2025</p>
  </div>
</footer>
</body>
</html>
